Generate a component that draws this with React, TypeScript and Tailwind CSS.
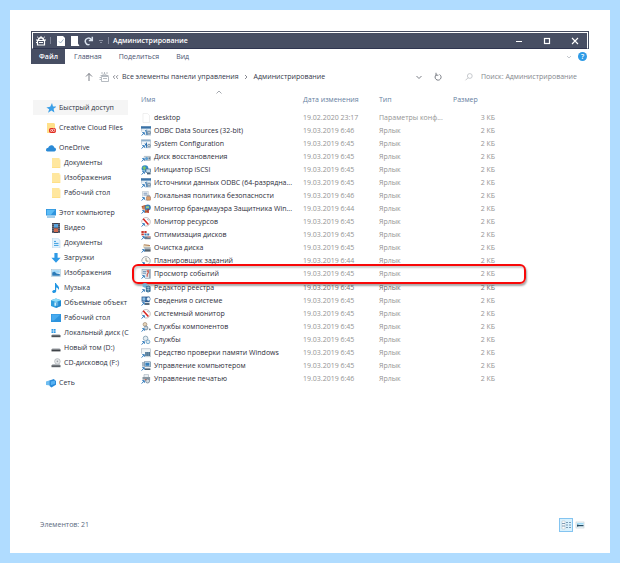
import type { ReactNode } from 'react';
import { clsx } from 'clsx';

type SideItem = { label: string; icon: string; nested?: boolean; active?: boolean };
type FileItem = { name: string; date: string; icon: string; type?: string; size?: string; highlighted?: boolean; bold?: boolean };

const sideGroups: SideItem[][] = [
  [{ label: 'Быстрый доступ', icon: 'star', active: true }],
  [{ label: 'Creative Cloud Files', icon: 'creative' }],
  [
    { label: 'OneDrive', icon: 'cloud' },
    { label: 'Документы', icon: 'folder', nested: true },
    { label: 'Изображения', icon: 'folder', nested: true },
    { label: 'Рабочий стол', icon: 'folder', nested: true },
  ],
  [
    { label: 'Этот компьютер', icon: 'pc' },
    { label: 'Видео', icon: 'video', nested: true },
    { label: 'Документы', icon: 'docs', nested: true },
    { label: 'Загрузки', icon: 'download', nested: true },
    { label: 'Изображения', icon: 'pictures', nested: true },
    { label: 'Музыка', icon: 'music', nested: true },
    { label: 'Объемные объект', icon: 'cube', nested: true },
    { label: 'Рабочий стол', icon: 'desktop', nested: true },
    { label: 'Локальный диск (C', icon: 'systemDrive', nested: true },
    { label: 'Новый том (D:)', icon: 'drive', nested: true },
    { label: 'CD-дисковод (F:)', icon: 'cd', nested: true },
  ],
  [{ label: 'Сеть', icon: 'network' }],
];

const files: FileItem[] = [
  { name: 'desktop', date: '19.02.2020 23:17', icon: 'ini', type: 'Параметры конф...', size: '3 КБ' },
  { name: 'ODBC Data Sources (32-bit)', date: '19.03.2019 6:46', icon: 'odbc' },
  { name: 'System Configuration', date: '19.03.2019 6:45', icon: 'config' },
  { name: 'Диск восстановления', date: '19.03.2019 6:45', icon: 'recovery' },
  { name: 'Инициатор iSCSI', date: '19.03.2019 6:45', icon: 'iscsi' },
  { name: 'Источники данных ODBC (64-разрядна...', date: '19.03.2019 6:45', icon: 'odbc' },
  { name: 'Локальная политика безопасности', date: '19.03.2019 6:46', icon: 'policy' },
  { name: 'Монитор брандмауэра Защитника Win...', date: '19.03.2019 6:44', icon: 'firewall' },
  { name: 'Монитор ресурсов', date: '19.03.2019 6:45', icon: 'gauge' },
  { name: 'Оптимизация дисков', date: '19.03.2019 6:45', icon: 'defrag' },
  { name: 'Очистка диска', date: '19.03.2019 6:45', icon: 'cleanup' },
  { name: 'Планировщик заданий', date: '19.03.2019 6:44', icon: 'clock' },
  { name: 'Просмотр событий', date: '19.03.2019 6:45', icon: 'events', highlighted: true },
  { name: 'Редактор реестра', date: '19.03.2019 6:45', icon: 'registry', bold: true },
  { name: 'Сведения о системе', date: '19.03.2019 6:45', icon: 'sysinfo' },
  { name: 'Системный монитор', date: '19.03.2019 6:45', icon: 'gauge' },
  { name: 'Службы компонентов', date: '19.03.2019 6:45', icon: 'components' },
  { name: 'Службы', date: '19.03.2019 6:45', icon: 'services' },
  { name: 'Средство проверки памяти Windows', date: '19.03.2019 6:45', icon: 'memory' },
  { name: 'Управление компьютером', date: '19.03.2019 6:45', icon: 'computer' },
  { name: 'Управление печатью', date: '19.03.2019 6:46', icon: 'printer' },
];

const sideIcons: Record<string, ReactNode> = {
  star: <path d="M6 0 7 3.4 10.4 3.6 7.6 5.8 8.4 9.4 5.4 7.4 2 9.8 3.2 6.2.4 4.4 4.2 3.8Z" fill="#3a9fe8" />,
  creative: (
    <>
      <path d="M1 0h7l1 1v9H1Z" fill="#ffe08a" />
      <rect x="3" y="5" width="7" height="5" rx="2" fill="#e0261c" />
      <circle cx="5.4" cy="7.5" r="1" fill="none" stroke="#fff" strokeWidth=".7" />
      <circle cx="7.6" cy="7.3" r="1.2" fill="none" stroke="#fff" strokeWidth=".7" />
    </>
  ),
  cloud: <path d="M0 7.2C0 5.6 1.2 4.8 2.2 4.8 2.8 3 4.2 2 5.8 2.2 7.2 2.4 8 3.4 8.2 4.6 9.4 4.8 10 5.6 10 6.6 10 7.8 9.2 8.4 8.4 8.4H1.4C.6 8.4 0 8 0 7.2Z" fill="#2b8ad6" />,
  folder: (
    <>
      <path d="M1 0h7.5v10H1Z" fill="#ffe79f" />
      <path d="M8.5 1.5h.8V10H1v-.6h7.5Z" fill="#ffd970" />
    </>
  ),
  pc: (
    <>
      <rect x="0" y="1" width="10" height="6.5" fill="#2f94dd" />
      <path d="M.8 1.8h8.4L5 6.7H.8Z" fill="#5cbcf6" />
      <path d="M1 9h8" stroke="#4f9fd6" />
    </>
  ),
  video: (
    <>
      <rect x="1" y="0" width="8" height="10" fill="#3c4150" />
      <rect x="3" y="1" width="4" height="3.6" fill="#5aa3dc" />
      <rect x="3" y="5.4" width="4" height="3.6" fill="#d06a50" />
      <path d="M2 .8v9M8 .8v9" stroke="#c9ced8" strokeWidth=".8" strokeDasharray="1 1" />
    </>
  ),
  docs: (
    <>
      <path d="M1.5 0h5L9 2.2V10H1.5Z" fill="#e3f2fc" stroke="#a8cfe8" strokeWidth=".5" />
      <path d="M3 3.4h2M3 5.4h4.5M3 7.4h4.5" stroke="#3a9de0" />
    </>
  ),
  download: <path d="M3.4 0h3.2v4.8H9.6L5 9.8.4 4.8h3Z" fill="#2e9ae6" />,
  pictures: (
    <>
      <rect x=".4" y="1.4" width="9.2" height="7.2" fill="#eef6fb" stroke="#a8c4d6" strokeWidth=".6" />
      <path d="M1.2 2.2h7.6v2.6H1.2Z" fill="#9fd7f8" />
      <path d="M1.2 7.8V4.6l2.4-.8 2 1.8 3.2.4v1.8Z" fill="#2c7bb8" />
    </>
  ),
  music: <path d="M4 0h1c.2 2 3.6 2.6 3 6l-.6 1c0-1.8-1-2.4-2.2-2.6V8c0 1.2-1 2-2.2 2S1.2 9.4 1.2 8.5 2.6 6.9 4 7Z" fill="#2196e3" />,
  cube: (
    <>
      <path d="M0 2.2 5 .4l5 1.8v5.8L5 10 0 8Z" fill="#2f9fdf" />
      <path d="M0 2.2 5 .4l5 1.8-5 1.9Z" fill="#8fdcf7" />
      <path d="M3.4 4.4h3.8v3.4H3.4Z" fill="#c9effc" />
      <path d="M5 5v5L10 8V2.4Z" fill="#1a7fc9" opacity=".6" />
    </>
  ),
  desktop: (
    <>
      <rect x="0" y="1" width="10" height="8" fill="#2c93dd" />
      <path d="M.6 1.6h8.8L3 7.4H.6Z" fill="#48abef" />
    </>
  ),
  systemDrive: (
    <>
      <path d="M.5 1h1.8v1.8H.5ZM2.8 1h1.8v1.8H2.8ZM.5 3.3h1.8v1.8H.5ZM2.8 3.3h1.8v1.8H2.8Z" fill="#2d9be8" />
      <path d="M1.5 6h7l1 1.5h-9Z" fill="#c5c9cd" />
      <rect x=".5" y="7.2" width="9" height="2" fill="#4c5157" />
    </>
  ),
  drive: (
    <>
      <path d="M1.5 5h7l1 1.6h-9Z" fill="#c9ccd0" />
      <rect x=".5" y="6.4" width="9" height="2" fill="#3f4348" />
    </>
  ),
  cd: (
    <>
      <circle cx="6.4" cy="3.4" r="2.8" fill="#e4e6e8" stroke="#a2a7ac" strokeWidth=".6" />
      <circle cx="6.4" cy="3.4" r=".8" fill="#9aa0a6" />
      <path d="M1.5 6h7l1 1.5h-9Z" fill="#b9bec3" />
      <rect x=".5" y="7.2" width="9" height="2" fill="#5b6066" />
    </>
  ),
  network: (
    <>
      <path d="M0 3.6 4.6 2v5.6L0 7Z" fill="#6fbdf0" />
      <path d="M3.6 2.4 7.8 1 10 3v3.8L5.4 9.4 3.6 8Z" fill="#2a8ad8" />
      <path d="M4.8 3.6 9 2.6v3.2L4.8 7.2Z" fill="#57b2f3" />
    </>
  ),
};

const fileIcons: Record<string, ReactNode> = {
  ini: <path d="M2 .5h4.5L8.5 2.5v7H2Z" fill="#fff" stroke="#e6e6e6" strokeWidth=".6" />,
  odbc: (
    <>
      <rect x="0" y=".4" width="10" height="8.6" fill="#e4edf4" stroke="#7f9db8" strokeWidth=".6" />
      <rect x="0" y=".4" width="10" height="2.2" fill="#3a72a8" />
      <path d="M4.4 4 6.4 9M5.8 3.6V9" stroke="#4d86b8" />
      <circle cx="8" cy="6.6" r="1.6" fill="#b9c6d1" stroke="#56718a" strokeWidth=".7" />
    </>
  ),
  config: (
    <>
      <rect x=".4" y=".8" width="9" height="8" fill="#f1f5f8" stroke="#9db0c0" strokeWidth=".6" />
      <rect x=".4" y=".8" width="9" height="1.6" fill="#8db0cc" />
      <path d="M4 4.4 6 8.5M5.5 3.5v5" stroke="#2e73b3" />
      <circle cx="8" cy="6.6" r="1.4" fill="#cdd6dd" stroke="#647b8f" strokeWidth=".7" />
    </>
  ),
  recovery: (
    <>
      <rect x="3" y="4.4" width="6.6" height="4" rx=".6" fill="#d2dbe2" stroke="#8d9aa6" strokeWidth=".6" />
      <circle cx="5.6" cy="6.4" r="1.5" fill="#5d9fd2" />
      <path d="M7.6 5.4h1.5v2H7.6Z" fill="#5e7488" />
    </>
  ),
  iscsi: (
    <>
      <circle cx="4" cy="3.6" r="3.4" fill="#3388c8" />
      <path d="M1.4 2.4 3.6 1l1.6 2-2 2.6Z" fill="#79c46a" />
      <rect x="5" y="4" width="4.6" height="3.4" fill="#c4dcec" stroke="#4a6f90" strokeWidth=".7" />
      <rect x="6" y="8" width="3.6" height="1.4" fill="#4d6478" />
    </>
  ),
  policy: (
    <>
      <path d="M1.5.4h5.8V9H1.5Z" fill="#f5f8fa" stroke="#adbac4" strokeWidth=".6" />
      <path d="M2.5 2.2h3.8M2.5 4h3.8" stroke="#5779a6" strokeWidth=".8" />
      <rect x="5.5" y="5.6" width="4" height="3.6" rx=".4" fill="#dfa06c" stroke="#9a6a52" strokeWidth=".5" />
      <path d="M6.4 5.6V4.4h2.2v1.2" fill="none" stroke="#7f8894" strokeWidth=".7" />
    </>
  ),
  firewall: (
    <>
      <path d="M.5 2.2 4 1l3 .6v7L3 9Z" fill="#b6572f" />
      <path d="M.6 4h6M.6 6h6M3 1.4v8" stroke="#e8b895" strokeWidth=".5" />
      <circle cx="6.8" cy="3.4" r="3" fill="#3d7eb6" />
      <path d="M5 2.2h3v2H5Z" fill="#9ecb86" />
      <path d="M7.2 5v4" stroke="#b32a20" strokeWidth="1.2" />
    </>
  ),
  gauge: (
    <>
      <circle cx="5" cy="4.8" r="4.3" fill="#fdfafa" stroke="#b8b2b5" strokeWidth=".8" />
      <path d="M2.2 1.8 7.4 7.6" stroke="#d8231f" strokeWidth="1.5" />
      <path d="M6.2 2.2 7.8 3.2" stroke="#7f9fbe" strokeWidth=".8" />
    </>
  ),
  defrag: (
    <>
      <path d="M.4 1h2.4v2H.4ZM3.4 1h2.2v2H3.4ZM.4 3.4h2.4v2H.4Z" fill="#c9372e" />
      <path d="M3.4 3.4h2.2v2H3.4ZM6.2 3.4h2v2h-2Z" fill="#3f78b0" />
      <path d="M3 6.4h6.6v2.8H3Z" fill="#6c7d8d" />
      <path d="M6.4 6.2h3v1.4h-3Z" fill="#e29a8f" />
    </>
  ),
  cleanup: (
    <>
      <path d="M2 1.4h6l1.4 3.4H2Z" fill="#e9dcc4" />
      <path d="M3 1.8 9 2.6" stroke="#b3845d" />
      <rect x="3" y="4.2" width="6.6" height="2" fill="#a7b1b9" />
      <rect x="3" y="6.2" width="6.6" height="2.4" fill="#56646f" />
    </>
  ),
  clock: (
    <>
      <circle cx="5" cy="4.8" r="4.2" fill="#fbfaf5" stroke="#9ba3aa" strokeWidth=".9" />
      <path d="M5 2v3l2.4.2" fill="none" stroke="#8a8271" strokeWidth=".8" />
    </>
  ),
  events: (
    <>
      <rect x="1" y=".4" width="8.6" height="9" fill="#dde5ec" stroke="#8fa0b0" strokeWidth=".6" />
      <path d="M2 2.4h3M2 4.2h3" stroke="#5681ad" strokeWidth=".8" />
      <path d="M5.6 2.2 7.2 1.6 7.4 3.4 6.2 5.4v2.4" fill="none" stroke="#ce5548" strokeWidth="1.1" />
      <path d="M8.6 1v8" stroke="#7c90a4" strokeWidth=".8" />
    </>
  ),
  registry: (
    <>
      <path d="M1.6.8 4 0l2.4.8v3L4 4.8 1.6 3.8Z" fill="#70b4d9" />
      <path d="M4.8 3.4 7.4 2.6l2.2 1v4.8L7 9.6l-2.2-1Z" fill="#3a6f96" />
      <path d="M5.6 4.4h3M5.6 6.6h3M7.2 3.4v5.4" stroke="#b7dced" strokeWidth=".6" />
    </>
  ),
  sysinfo: (
    <>
      <rect x=".6" y=".6" width="8" height="5.6" fill="#28588e" />
      <path d="M1.4 1.4h3v3.2h-3Z" fill="#8fc3ea" />
      <circle cx="7.4" cy="3" r="1.9" fill="#edf5fb" stroke="#3b6ea6" strokeWidth=".6" />
      <path d="M4 7h4.5v2H4Z" fill="#596c7e" />
    </>
  ),
  components: (
    <>
      <circle cx="4" cy="2.4" r="1.9" fill="#e8d4b8" stroke="#9c8b76" strokeWidth=".7" />
      <circle cx="5" cy="6" r="1.9" fill="#c7d3dc" stroke="#6f8090" strokeWidth=".8" />
      <circle cx="8.8" cy="7.4" r=".9" fill="#65798c" />
    </>
  ),
  services: (
    <>
      <circle cx="4.6" cy="3.4" r="2.3" fill="#e3ecf2" stroke="#92aabb" />
      <circle cx="7" cy="6.8" r="1.9" fill="#dceaf2" stroke="#6fa5c9" strokeWidth=".9" />
    </>
  ),
  memory: (
    <>
      <rect x=".4" y=".8" width="9.2" height="8" fill="#f2f5f7" stroke="#a5b2bd" strokeWidth=".6" />
      <path d="M4 4h5v4H4Z" fill="#80a3c0" />
      <path d="M5 4v4M6.8 4v4M8.4 4v4" stroke="#34566f" strokeWidth=".7" />
    </>
  ),
  computer: (
    <>
      <path d="M1 1h2.2v6.8H1Z" fill="#a9b8c5" />
      <rect x="3.4" y=".8" width="6" height="5" fill="#d3e4ef" stroke="#52718b" strokeWidth=".6" />
      <rect x="4.4" y="1.8" width="4" height="3" fill="#367fbc" />
      <path d="M4 7.4h5.4V9H4Z" fill="#4a5c6b" />
    </>
  ),
  printer: (
    <>
      <path d="M3 .6h4.5v2.8H3Z" fill="#eef3f7" stroke="#9caab6" strokeWidth=".6" />
      <rect x="1.5" y="3" width="7.6" height="3.4" fill="#8997a3" />
      <circle cx="6.6" cy="7" r="2" fill="#d5dde3" stroke="#61788d" strokeWidth=".7" />
      <path d="M3.5 5.8h2" stroke="#c7604e" />
    </>
  ),
};

function Glyph({ children, className }: { children: ReactNode; className?: string }) {
  return (
    <svg viewBox="0 0 10 10" aria-hidden="true" className={clsx('h-[10px] w-[10px] shrink-0', className)}>
      {children}
    </svg>
  );
}

function ShortcutArrow() {
  return (
    <>
      <rect x="0" y="5.6" width="4" height="4.4" fill="#fff" />
      <path d="M.6 9.6 3 7M1.2 6.6h2.2v2.2" fill="none" stroke="#2874b8" strokeWidth=".9" />
    </>
  );
}

function TitleBar() {
  return (
    <header className="border-t border-r border-l border-[#454c61]">
      <div className="flex h-[17px] items-center border border-t-white border-r-white border-b-[#2f3550] border-l-white bg-[#474e63] pl-[3px] text-white">
        <Glyph>
          <path d="M1.5 4.500h7V9h-7Z" fill="none" stroke="#fff" strokeWidth="1.2" />
          <path d="M2.5 4C2.500 1 7.500 1 7.500 4" fill="none" stroke="#fff" strokeWidth="1.400" />
          <path d="M5 0v2M1.200.8 2.600 2.200M8.800.8 7.400 2.200M0 4h2M8 4h2M0 6.500h1.500M3 6.500h4" fill="none" stroke="#fff" />
        </Glyph>
        <span className="ml-1 h-[7px] w-px bg-[#7d8396]" />
        <button aria-label="Свойства" className="ml-[5px]">
          <Glyph>
            <path d="M1 0h6l2 2v8H1Z" fill="#fff" />
            <path d="m3 5.4 1.5 1.6L7.5 3.4" fill="none" stroke="#8fa6bd" strokeWidth=".9" />
          </Glyph>
        </button>
        <button aria-label="Новая папка" className="ml-1">
          <Glyph>
            <path d="M1 0h7v7.5L9.500 10H1Z" fill="#fff" />
          </Glyph>
        </button>
        <button aria-label="Вернуть" className="ml-1">
          <Glyph>
            <path d="M7.5 4.2A3.2 3.2 0 1 0 5.600 8.400M8.300.8v3.6H4.800" fill="none" stroke="#d9e2ee" strokeWidth="1.5" />
          </Glyph>
        </button>
        <button aria-label="Настройка панели быстрого доступа" className="ml-[2px]">
          <Glyph>
            <path d="M3 4.5h4M4 6.5h2" stroke="#9399aa" strokeWidth=".9" />
          </Glyph>
        </button>
        <span className="ml-[2px] h-[7px] w-px bg-[#7d8396]" />
        <h1 className="ml-[4px] font-semibold">Администрирование</h1>
        <div className="mr-[7px] ml-auto flex gap-[18px]">
          <button aria-label="Свернуть">
            <Glyph>
              <path d="M2 5.500h6" stroke="#fff" />
            </Glyph>
          </button>
          <button aria-label="Развернуть">
            <Glyph>
              <rect x="2.500" y="2.500" width="5" height="5" fill="none" stroke="#fff" strokeWidth="1.200" />
            </Glyph>
          </button>
          <button aria-label="Закрыть">
            <Glyph>
              <path d="m2 2 6 6M8 2 2 8" stroke="#fff" strokeWidth="1.1" />
            </Glyph>
          </button>
        </div>
      </div>
    </header>
  );
}

function Ribbon() {
  return (
    <nav className="flex h-[15px] items-center border-l border-[#454c61] text-[#4a5270]">
      <button className="h-full w-[33px] bg-[#474e63] font-semibold text-white">Файл</button>
      <button className="ml-[9px]">Главная</button>
      <button className="ml-[17px]">Поделиться</button>
      <button className="ml-[17px]">Вид</button>
      <button aria-label="Свернуть ленту" className="ml-auto">
        <Glyph>
          <path d="m3 4 2 2 2-2" fill="none" stroke="#b5bac2" strokeWidth=".8" />
        </Glyph>
      </button>
      <button aria-label="Справка" className="mr-[2px] ml-1 flex h-[9px] w-[9px] items-center justify-center rounded-full bg-[#2f9be6] font-semibold text-white">
        ?
      </button>
    </nav>
  );
}

function AddressBar() {
  return (
    <div className="flex h-[25px] items-center pl-[53px] text-[#33374a]">
      <button aria-label="Вверх">
        <Glyph>
          <path d="M5 9V1.5M2 4.5l3-3 3 3" fill="none" stroke="#6c6f78" strokeWidth=".9" />
        </Glyph>
      </button>
      <Glyph className="ml-[5px]">
        <path d="M2.500 4.500h7v5h-7ZM4 6.500h4M3 4C3.500 1.500 7.500 1.500 8 4M1.500 3.500h8M.5 5.500h1.500M.5 7.500h1.500M3 0v2M5.500 0v2M8 0v2" fill="none" stroke="#a5abb2" strokeWidth=".8" />
      </Glyph>
      <Glyph className="ml-[3px]">
        <path d="M3 3.200 1.200 5 3 6.800M6 3.200 4.200 5 6 6.800" fill="none" stroke="#6c6f78" strokeWidth=".8" />
      </Glyph>
      <a href="#items">Все элементы панели управления</a>
      <Glyph className="mx-[2px]">
        <path d="m4 3 2 2-2 2" fill="none" stroke="#6c6f78" strokeWidth=".8" />
      </Glyph>
      <a href="#admin" className="ml-[1px]">Администрирование</a>
      <button aria-label="Предыдущие расположения" className="ml-auto">
        <Glyph>
          <path d="m2.5 4 2.5 2.5L7.5 4" fill="none" stroke="#6c6f78" strokeWidth=".9" />
        </Glyph>
      </button>
      <button aria-label="Обновить" className="ml-[9px]">
        <Glyph>
          <path d="M3.2 2.8A3 3 0 1 0 6.5 2.5M3 .8v2.4h2.4" fill="none" stroke="#6c6f78" strokeWidth=".9" />
        </Glyph>
      </button>
      <label htmlFor="search" className="ml-[21px]">
        <Glyph>
          <circle cx="5.8" cy="4" r="2.4" fill="none" stroke="#b9bdc1" strokeWidth=".8" />
          <path d="M4 5.8 1.5 8.3" stroke="#b9bdc1" strokeWidth=".8" />
        </Glyph>
      </label>
      <input
        id="search"
        type="text"
        placeholder="Поиск: Администрирование"
        className="ml-[7px] w-[108px] bg-transparent outline-none placeholder:text-[#84878e]"
      />
    </div>
  );
}

function Sidebar() {
  return (
    <aside className="w-[97px] shrink-0 pt-[11px] pl-[2px]">
      <div className="flex flex-col gap-[5px]">
        {sideGroups.map((group, i) => (
          <ul key={i}>
            {group.map((item) => (
              <li key={item.label}>
                <a
                  href="#admin"
                  className={clsx(
                    'flex h-[15px] items-center gap-[3px] whitespace-nowrap',
                    item.nested ? 'pl-[18px]' : 'pl-[13px]',
                    item.active && 'bg-[#f5f5f5]'
                  )}
                >
                  <Glyph>{sideIcons[item.icon]}</Glyph>
                  {item.label}
                </a>
              </li>
            ))}
          </ul>
        ))}
      </div>
    </aside>
  );
}

function FileTable() {
  return (
    <table className="w-full table-fixed text-left text-[#949494]">
      <colgroup>
        <col className="w-[162px]" />
        <col className="w-[76px]" />
        <col className="w-[74px]" />
        <col className="w-[42px]" />
        <col />
      </colgroup>
      <thead className="text-[#66809f]">
        <tr className="h-[22px]">
          <th className="relative p-0 font-normal">
            Имя
            <svg viewBox="0 0 6 4" aria-hidden="true" className="absolute top-[1px] left-1/2 ml-[-6px] h-1 w-[6px]">
              <path d="m.5 3.500 2.500-2.500 2.500 2.500" fill="none" stroke="#8d9299" strokeWidth=".8" />
            </svg>
          </th>
          <th className="p-0 font-normal">Дата изменения</th>
          <th className="p-0 font-normal">Тип</th>
          <th className="p-0 font-normal">Размер</th>
          <th className="p-0" />
        </tr>
      </thead>
      <tbody>
        {files.map((file) => (
          <tr
            key={file.name}
            className={clsx('relative', file.highlighted ? 'h-[14px]' : 'h-[13px]', file.bold && 'font-medium text-[#6f6f6f]')}
          >
            <td className="p-0 text-[#2e2e3a]">
              {file.highlighted && (
                <span className="pointer-events-none absolute top-[-3px] left-[-9px] h-5 w-[394px] rounded-[6px] border-2 border-[#f80808] shadow-[1px_2px_2px_rgba(0,0,0,0.35),inset_1px_2px_2px_rgba(0,0,0,0.2)]" />
              )}
              <span className="flex items-center gap-[3px] whitespace-nowrap">
                <Glyph>
                  {fileIcons[file.icon]}
                  {file.icon !== 'ini' && <ShortcutArrow />}
                </Glyph>
                {file.name}
              </span>
            </td>
            <td className="p-0">{file.date}</td>
            <td className="p-0 whitespace-nowrap">{file.type ?? 'Ярлык'}</td>
            <td className="p-0 text-right">{file.size ?? '2 КБ'}</td>
            <td className="p-0" />
          </tr>
        ))}
      </tbody>
    </table>
  );
}

function StatusBar() {
  return (
    <footer className="mt-auto flex h-4 items-center pr-1 pl-[9px] text-[#5b6a80]">
      Элементов: 21
      <button aria-label="Таблица" className="ml-auto flex h-[14px] w-[14px] items-center justify-center border border-[#84c4f0] bg-[#d9f1fd]">
        <Glyph>
          <path d="M1 1h3v8H1Z" fill="#fff" stroke="#b3b9bf" strokeWidth=".5" />
          <path d="M1 3.5h3M1 6h3M5 2.5h2M8 2.5h2M5 5h2M8 5h2M5 7.5h2M8 7.5h2" stroke="#7391ab" strokeWidth=".9" />
        </Glyph>
      </button>
      <button aria-label="Крупные значки" className="ml-[2px]">
        <Glyph>
          <rect x="1" y="2" width="8" height="6" fill="#eef8fd" stroke="#c4ccd2" strokeWidth=".6" />
          <path d="M2 3h6.5v1.5H2Z" fill="#9fdcf8" />
          <path d="M2 4.500 4.500 5h4v1.200H4L2 6.800Z" fill="#254a60" />
        </Glyph>
      </button>
    </footer>
  );
}

export default function App() {
  return (
    <div className="flex min-h-screen flex-col border-[10px] border-[#b0dcff] bg-white px-[21px] pt-[21px] pb-5 font-['Open_Sans','Noto_Sans',sans-serif] text-[7px] leading-[10px] text-[#2e3242]">
      <TitleBar />
      <Ribbon />
      <AddressBar />
      <div className="flex">
        <Sidebar />
        <main className="min-w-0 flex-1 pl-[13px]">
          <FileTable />
        </main>
      </div>
      <StatusBar />
    </div>
  );
}
